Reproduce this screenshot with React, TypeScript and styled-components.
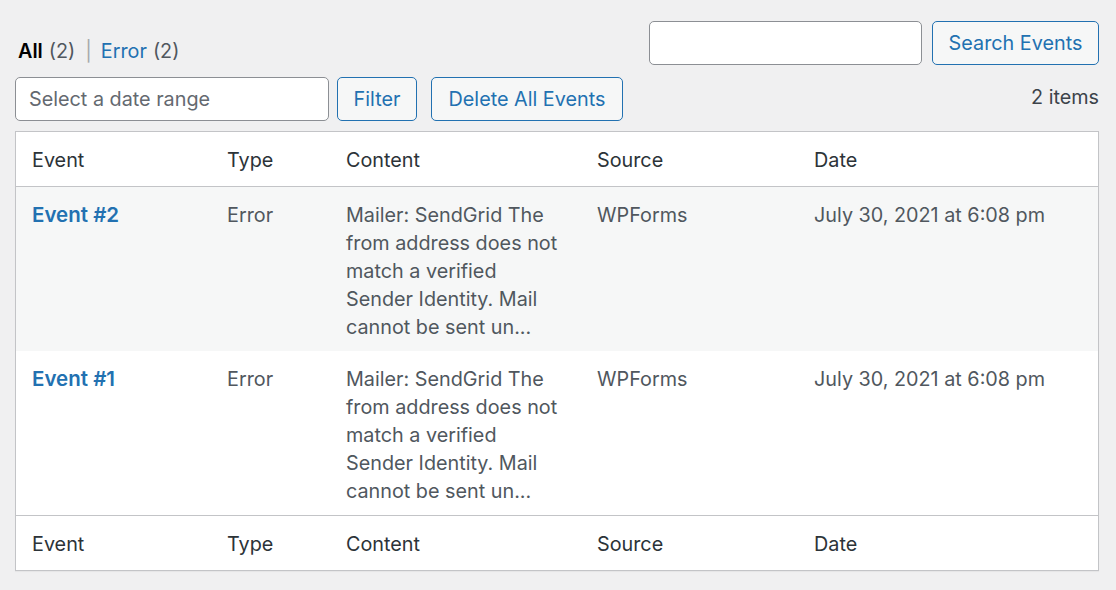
import React from "react";
import styled, { createGlobalStyle } from "styled-components";

const GlobalStyle = createGlobalStyle`
  html, body {
    margin: 0;
    padding: 0;
    background: #f0f0f1;
  }
  body {
    font-family: Inter, "Noto Sans", "Liberation Sans", sans-serif;
    font-size: 19.8px;
    color: #3c434a;
  }
  * { box-sizing: border-box; }
`;

const Page = styled.div`
  padding: 21px 17px 20px 15px;
`;

const TopRow = styled.div`
  display: flex;
  justify-content: space-between;
  align-items: flex-end;
  height: 44px;
`;

const SubSub = styled.ul`
  list-style: none;
  margin: 0 0 0 3px;
  padding: 0;
  display: flex;
  align-items: center;
  line-height: 28px;
  color: #50575e;
`;

const SubItem = styled.li`
  display: flex;
  align-items: center;
`;

const SubLink = styled.a<{ $current?: boolean }>`
  color: ${(p) => (p.$current ? "#000" : "#2271b1")};
  font-weight: ${(p) => (p.$current ? 600 : 400)};
  text-decoration: none;
  margin-right: 6px;
`;

const Count = styled.span`
  color: #50575e;
`;

const Sep = styled.span`
  color: #a7aaad;
  margin: 0 9px 0 10px;
`;

const SearchBox = styled.div`
  display: flex;
  gap: 10px;
`;

const TextInput = styled.input<{ $width: number }>`
  width: ${(p) => p.$width}px;
  height: 44px;
  border: 1px solid #8c8f94;
  border-radius: 5px;
  background: #fff;
  font: inherit;
  color: #2c3338;
  padding: 0 13px;
  &::placeholder {
    color: #646970;
  }
`;

const Button = styled.button<{ $width: number }>`
  width: ${(p) => p.$width}px;
  height: 44px;
  padding: 0;
  border: 1px solid #2271b1;
  border-radius: 5px;
  background: #f6f7f7;
  color: #2271b1;
  font: inherit;
  cursor: pointer;
`;

const TableNav = styled.div`
  display: flex;
  align-items: center;
  margin-top: 12px;
  height: 44px;
`;

const Actions = styled.div<{ $gap: number }>`
  display: flex;
  gap: ${(p) => p.$gap}px;
  margin-right: 14px;
`;

const Items = styled.div`
  margin-left: auto;
  color: #3c434a;
  margin-top: -4px;
`;

const Table = styled.table`
  width: 100%;
  margin-top: 10px;
  border: 1px solid #c3c4c7;
  border-spacing: 0;
  border-collapse: separate;
  background: #fff;
  box-shadow: 0 1px 1px rgba(0, 0, 0, 0.04);
  table-layout: fixed;
`;

const HeadCell = styled.th<{ $width?: number; $foot?: boolean }>`
  width: ${(p) => (p.$width ? `${p.$width}px` : "auto")};
  text-align: left;
  font-weight: 400;
  color: #2c3338;
  padding: 15px 22px 12px 16px;
  line-height: 27px;
  border-bottom: ${(p) => (p.$foot ? "none" : "1px solid #c3c4c7")};
  border-top: ${(p) => (p.$foot ? "1px solid #c3c4c7" : "none")};
`;

const Row = styled.tr<{ $alt?: boolean }>`
  background: ${(p) => (p.$alt ? "#f6f7f7" : "#fff")};
`;

const Cell = styled.td`
  vertical-align: top;
  padding: 14px 22px 10px 16px;
  line-height: 28px;
  color: #50575e;
`;

const EventLink = styled.a`
  color: #2271b1;
  font-weight: 600;
  text-decoration: none;
  font-size: 20.5px;
`;

const columns = [
  { label: "Event", width: 195 },
  { label: "Type", width: 119 },
  { label: "Content", width: 251 },
  { label: "Source", width: 217 },
  { label: "Date" },
];

const events = [
  { id: 2, alt: true },
  { id: 1, alt: false },
];

const content =
  "Mailer: SendGrid The from address does not match a verified Sender Identity. Mail cannot be sent un...";

export default function App() {
  return (
    <Page>
      <GlobalStyle />
      <TopRow>
        <SubSub>
          <SubItem>
            <SubLink $current>All</SubLink>
            <Count>(2)</Count>
            <Sep>|</Sep>
          </SubItem>
          <SubItem>
            <SubLink>Error</SubLink>
            <Count>(2)</Count>
          </SubItem>
        </SubSub>
        <SearchBox>
          <TextInput $width={273} type="search" />
          <Button $width={167}>Search Events</Button>
        </SearchBox>
      </TopRow>

      <TableNav>
        <Actions $gap={8}>
          <TextInput $width={314} placeholder="Select a date range" />
          <Button $width={80}>Filter</Button>
        </Actions>
        <Actions $gap={0}>
          <Button $width={192}>Delete All Events</Button>
        </Actions>
        <Items>2 items</Items>
      </TableNav>

      <Table>
        <thead>
          <tr>
            {columns.map((c) => (
              <HeadCell key={c.label} $width={c.width}>
                {c.label}
              </HeadCell>
            ))}
          </tr>
        </thead>
        <tbody>
          {events.map((e) => (
            <Row key={e.id} $alt={e.alt}>
              <Cell>
                <EventLink href="#">Event #{e.id}</EventLink>
              </Cell>
              <Cell>Error</Cell>
              <Cell>{content}</Cell>
              <Cell>WPForms</Cell>
              <Cell>July 30, 2021 at 6:08 pm</Cell>
            </Row>
          ))}
        </tbody>
        <tfoot>
          <tr>
            {columns.map((c) => (
              <HeadCell key={c.label} $foot>
                {c.label}
              </HeadCell>
            ))}
          </tr>
        </tfoot>
      </Table>
    </Page>
  );
}
